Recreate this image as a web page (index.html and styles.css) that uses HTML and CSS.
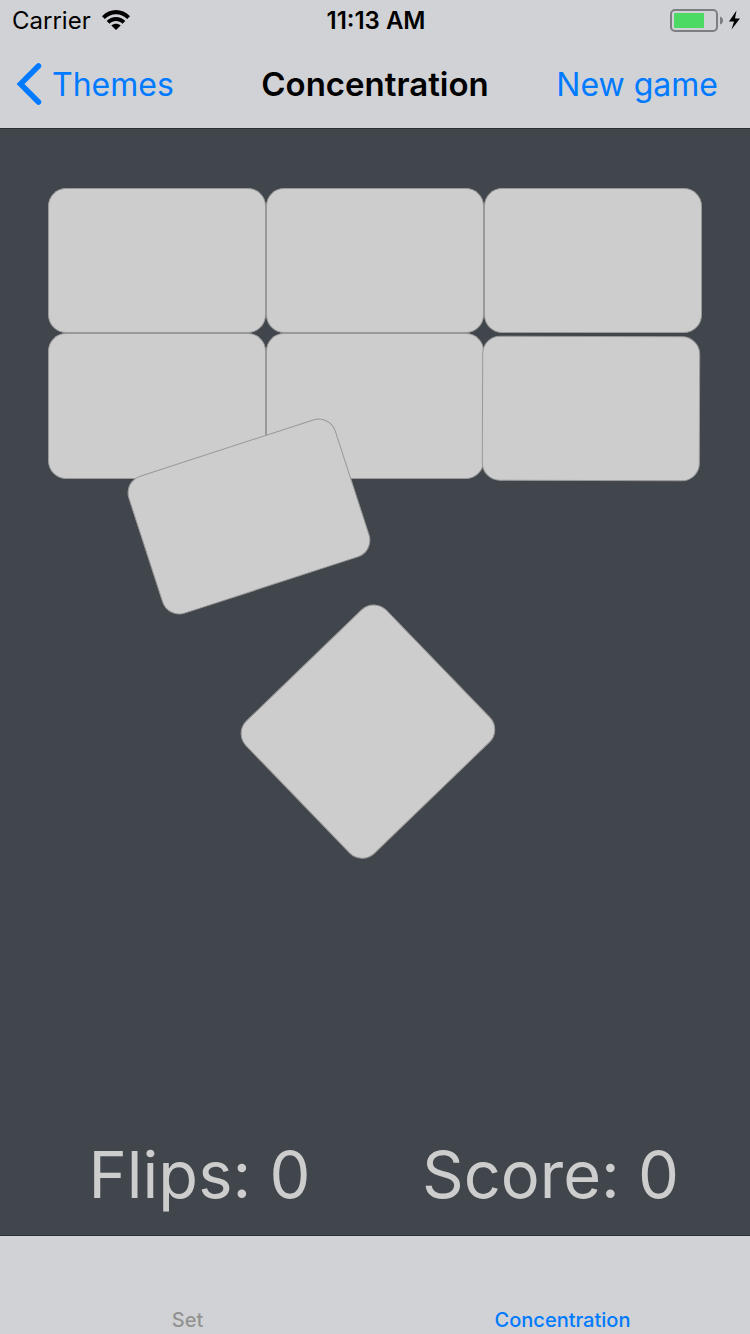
FILE: index.html
```html
<!DOCTYPE html>
<html lang="en">
<head>
<meta charset="utf-8">
<meta name="viewport" content="width=device-width, initial-scale=1">
<title>Concentration</title>
<link rel="stylesheet" href="styles.css">
</head>
<body>
<header class="top">
  <div class="status">
    <div class="status-left">
      <span>Carrier</span>
      <svg class="wifi" viewBox="0 0 28 20" width="28" height="20" aria-hidden="true">
        <path d="M0 6.200C7.600-2 20.400-2 28 6.200L25.200 9C19 2.600 9 2.600 2.800 9Z"/>
        <path d="M4.700 11C9.800 5.700 18.200 5.700 23.300 11L20.500 13.700C16.800 10 11.200 10 7.500 13.700Z"/>
        <path d="M9.300 15.500C12 13.200 16 13.200 18.700 15.500L14 20Z"/>
      </svg>
    </div>
    <span class="clock">11:13 AM</span>
    <div class="status-right">
      <svg viewBox="0 0 70 24" width="70" height="24" aria-hidden="true">
        <rect x="1" y="2" width="46" height="21" rx="4" fill="none" stroke="#7d7e81" stroke-width="2"/>
        <rect x="4" y="5" width="30" height="15" rx="1" fill="#4cd964"/>
        <path d="M50 8.500Q53 9.500 53 12.500T50 16.500Z" fill="#7d7e81"/>
        <path d="M66.500 2.500L59 13.500H64L61.500 21.500L70 10.500H65Z"/>
      </svg>
    </div>
  </div>
  <nav class="nav">
    <a class="back" href="#themes">
      <svg viewBox="0 0 26 42" width="26" height="42" aria-hidden="true"><path d="M22.500 3L4.500 21L22.500 39" fill="none" stroke="#007aff" stroke-width="5.500" stroke-linecap="round" stroke-linejoin="miter"/></svg>
      <span>Themes</span>
    </a>
    <h1 class="title">Concentration</h1>
    <button class="new-game" type="button">New game</button>
  </nav>
</header>
<main class="game">
  <div class="board">
    <button class="card" type="button" aria-label="Card 1"></button>
    <button class="card" type="button" aria-label="Card 2"></button>
    <button class="card" type="button" aria-label="Card 3"></button>
    <button class="card" type="button" aria-label="Card 4"></button>
    <button class="card" type="button" aria-label="Card 5"></button>
    <button class="card flying landing" type="button" aria-label="Card 6"></button>
    <button class="card flying tilted" type="button" aria-label="Card 7"></button>
    <button class="card flying dealt" type="button" aria-label="Card 8"></button>
  </div>
  <div class="scores">
    <span>Flips: 0</span>
    <span>Score: 0</span>
  </div>
</main>
<nav class="tabs">
  <a class="tab" href="#set">Set</a>
  <a class="tab active" href="#concentration">Concentration</a>
</nav>
</body>
</html>
```
FILE: styles.css
```css
* {
  box-sizing: border-box;
}

body {
  margin: 0;
  min-height: 100vh;
  display: flex;
  flex-direction: column;
  background: #41464c;
  color: #000;
  font-family: Inter, "Liberation Sans", sans-serif;
}

a {
  color: #007aff;
  text-decoration: none;
}

.top {
  background: #d1d2d6;
  border-bottom: 1px solid #2b2e33;
}

.status {
  height: 40px;
  padding: 0 10px 0 12px;
  display: grid;
  grid-template-columns: 1fr auto 1fr;
  align-items: center;
  font-size: 24px;
}

.status-left {
  display: flex;
  align-items: center;
  gap: 11px;
}

.clock {
  font-weight: 600;
}

.status-right {
  display: flex;
  justify-content: flex-end;
}

.nav {
  height: 88px;
  padding: 0 32px 0 16px;
  display: grid;
  grid-template-columns: 1fr auto 1fr;
  align-items: center;
  font-size: 32px;
}

.back {
  display: flex;
  align-items: center;
  gap: 10px;
}

.title {
  margin: 0 -16px 0 0;
  font-size: 33px;
  font-weight: 600;
}

.new-game {
  justify-self: end;
  padding: 0;
  border: 0;
  background: none;
  color: #007aff;
  font: inherit;
}

.game {
  flex: 1;
  display: flex;
  flex-direction: column;
}

.board {
  position: relative;
  flex: 1;
  margin: 59px 48px 0;
  display: grid;
  grid-template-columns: repeat(3, 1fr);
  align-content: start;
}

.card {
  aspect-ratio: 3 / 2;
  padding: 0;
  border: 1px solid #999;
  border-radius: 18px;
  background: #cdcdcd;
}

.flying {
  position: absolute;
  width: 33.333%;
}

.landing {
  left: 66.400%;
  top: 148px;
  transform: rotate(0.2deg);
}

.tilted {
  left: 14.100%;
  top: 256px;
  transform: rotate(-18deg);
}

.dealt {
  left: 34%;
  top: 451px;
  width: 30%;
  aspect-ratio: 196 / 185;
  transform: rotate(-44deg);
}

.scores {
  display: grid;
  grid-template-columns: 1fr 1fr;
  gap: 24px;
  padding: 0 36px 20px;
  color: #cdcdcd;
  font-size: 65px;
  line-height: 80px;
  text-align: center;
}

.tabs {
  height: 99px;
  display: grid;
  grid-template-columns: 1fr 1fr;
  align-items: end;
  background: #d1d2d6;
  border-top: 1px solid #2b2e33;
}

.tab {
  padding-bottom: 2px;
  color: #929292;
  font-size: 20px;
  font-weight: 500;
  line-height: 24px;
  text-align: center;
}

.tab.active {
  color: #007aff;
}
```
